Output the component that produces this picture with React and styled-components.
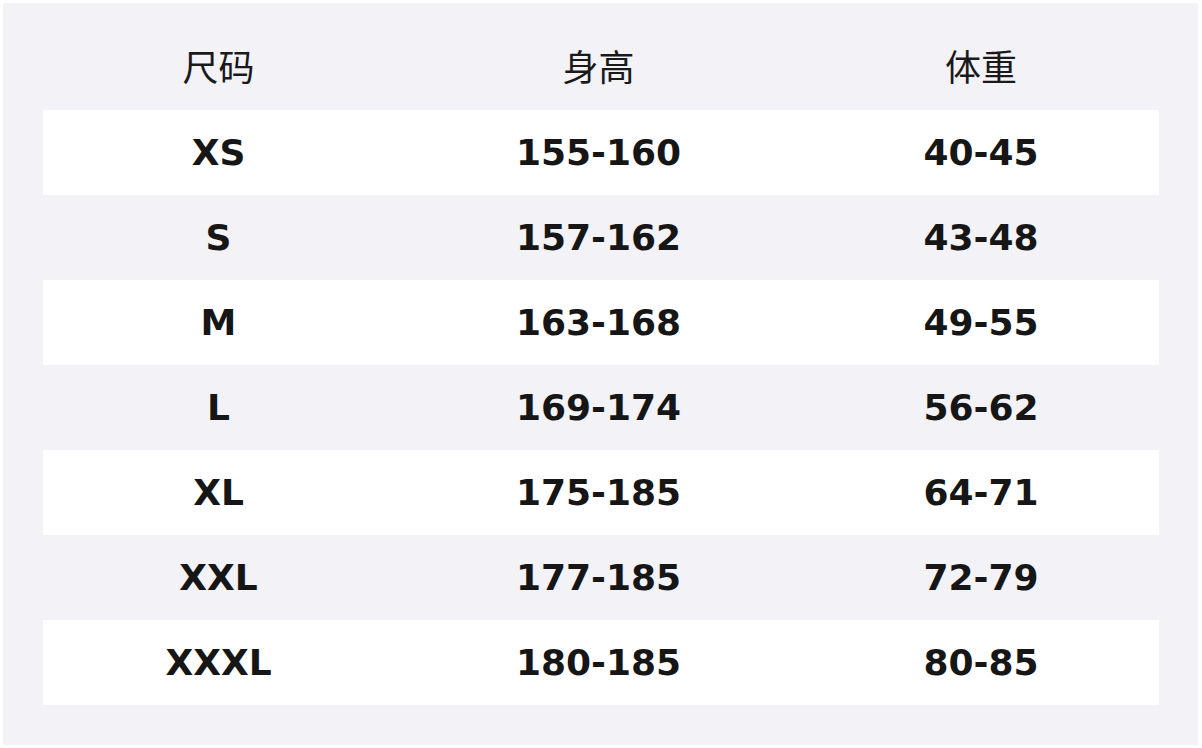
import React from 'react';
import styled, { createGlobalStyle } from 'styled-components';

const GlobalStyle = createGlobalStyle`
  html, body {
    margin: 0;
    padding: 0;
    background: #ffffff;
  }
`;

const Page = styled.div`
  width: 1202px;
  height: 748px;
  padding: 3px 4px 3px 3px;
  box-sizing: border-box;
`;

const Panel = styled.div`
  height: 100%;
  box-sizing: border-box;
  background: #f2f2f7;
  padding: 22px 39px 40px 40px;
`;

const Row = styled.div`
  display: grid;
  grid-template-columns: 351px 409px 1fr;
  height: 85px;
  align-items: center;
  background: ${p => (p.$white ? '#ffffff' : 'transparent')};
`;

const HeadRow = styled(Row)`
  padding-bottom: 6px;
  box-sizing: border-box;
`;

const HeadCell = styled.div`
  text-align: center;
  font-family: 'Noto Sans CJK SC', 'Noto Sans', sans-serif;
  font-size: 36px;
  font-weight: 400;
  color: #1a1a1a;
`;

const Cell = styled.div`
  text-align: center;
  font-family: 'DejaVu Sans', sans-serif;
  font-size: 36px;
  font-weight: 700;
  color: #161616;
  margin-top: -1px;
`;

const sizes = [
  ['XS', '155-160', '40-45'],
  ['S', '157-162', '43-48'],
  ['M', '163-168', '49-55'],
  ['L', '169-174', '56-62'],
  ['XL', '175-185', '64-71'],
  ['XXL', '177-185', '72-79'],
  ['XXXL', '180-185', '80-85'],
];

export default function App() {
  return (
    <>
      <GlobalStyle />
      <Page>
        <Panel>
          <HeadRow>
            <HeadCell>尺码</HeadCell>
            <HeadCell>身高</HeadCell>
            <HeadCell>体重</HeadCell>
          </HeadRow>
          {sizes.map((s, i) => (
            <Row key={s[0]} $white={i % 2 === 0}>
              <Cell>{s[0]}</Cell>
              <Cell>{s[1]}</Cell>
              <Cell>{s[2]}</Cell>
            </Row>
          ))}
        </Panel>
      </Page>
    </>
  );
}
